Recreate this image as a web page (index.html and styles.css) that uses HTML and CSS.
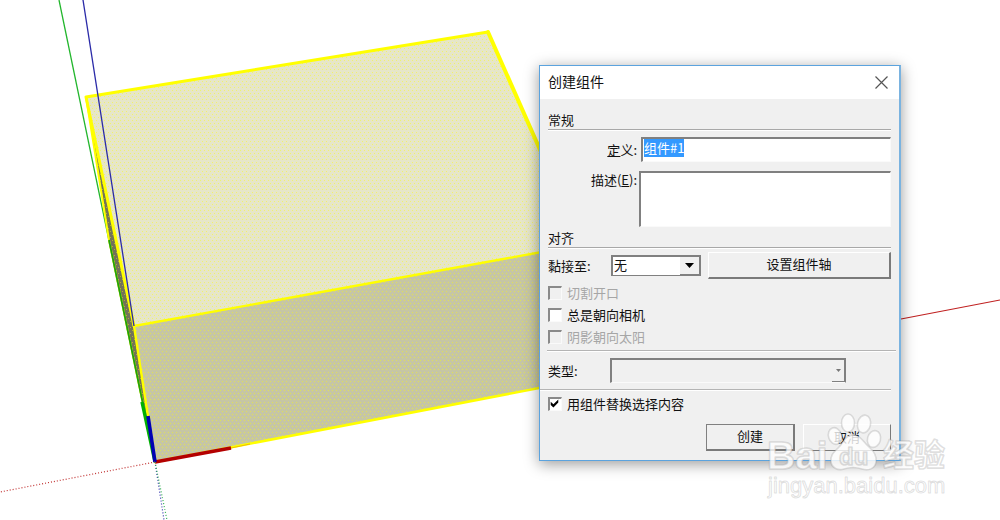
FILE: index.html
```
<!DOCTYPE html>
<html lang="zh-CN">
<head>
<meta charset="utf-8">
<meta name="viewport" content="width=device-width, initial-scale=1">
<title>创建组件</title>
<link rel="stylesheet" href="styles.css">
</head>

<body>
<main class="workspace">

<svg class="scene" viewBox="0 0 1000 520" preserveAspectRatio="xMinYMin slice" aria-hidden="true">
  <defs>
    <pattern id="dots" width="4" height="6" patternUnits="userSpaceOnUse">
      <rect x="0" y="0" width="1" height="1" fill="#ffff00"/>
      <rect x="2" y="3" width="1" height="1" fill="#ffff00"/>
    </pattern>
  </defs>

  <!-- axes behind the box -->
  <path d="M59 0L155 462" stroke="#22b62c" stroke-width="1.3"/>
  <path d="M901 319L1000 300" stroke="#c02020" stroke-width="1.2"/>

  <!-- faces -->
  <path d="M86 97L488 32L586 249L134 326Z" fill="#e6e6c8"/>
  <path d="M134 326L586 244L586 379L155 462Z" fill="#c6c6a4"/>
  <path d="M86 97L134 326L155 462L109 240Z" fill="#72725a"/>
  <path class="dots" d="M86 97L488 32L586 245L586 379L155 462L109 240Z" fill="url(#dots)"/>

  <!-- selected edges -->
  <g class="edges">
    <path d="M134 326L86 97L488 32" stroke-width="3"/>
    <path d="M488 32L586 254" stroke-width="4"/>
    <path d="M86 97L109 240L155 462" stroke-width="2"/>
    <path d="M155 462L134 326L586 244" stroke-width="2.4"/>
    <path d="M155 462L586 379" stroke-width="2.6"/>
  </g>

  <path d="M83 0L134 326" stroke="#2a2aa8" stroke-width="1.3"/>
  <path d="M109 240L155 462" stroke="#20a010" stroke-width="1.8"/>
  <path d="M142 402L155 462" stroke="#00b000" stroke-width="3.4"/>
  <path d="M231 448L250 444" stroke="#f0c000" stroke-width="1"/>
  <path d="M155 462L231 448" stroke="#b40000" stroke-width="3.6"/>
  <path d="M148 416L155 462" stroke="#0000b4" stroke-width="3.6"/>

  <!-- negative axes -->
  <g stroke-dasharray="1 2" stroke-width="1.2">
    <path d="M155 462L0 492" stroke="#c03030"/>
    <path d="M155 462L164 520" stroke="#3030b0"/>
    <path d="M155 462L167 520" stroke="#30b050"/>
  </g>
</svg>

<form class="dialog" role="dialog" aria-labelledby="dialog-title">
  <header class="titlebar">
    <h1 id="dialog-title">创建组件</h1>
    <button class="close" type="button" aria-label="关闭">
      <svg width="13" height="13" viewBox="0 0 13 13"><path d="M.5 .5L12.5 12.5M12.5 .5L.5 12.5" stroke="#555" stroke-width="1.2"/></svg>
    </button>
  </header>

  <div class="content">
    <h2 class="section">常规</h2>
    <div class="field">
      <label for="definition"><u>定</u>义:</label>
      <input class="sunken definition" id="definition" type="text" value="组件#1" autocomplete="off" spellcheck="false">
    </div>
    <div class="field">
      <label for="description">描述(<u>E</u>):</label>
      <textarea class="sunken description" id="description"></textarea>
    </div>

    <h2 class="section">对齐</h2>
    <div class="glue">
      <label for="glue">黏接至:</label>
      <div class="combo">
        <select class="sunken" id="glue"><option>无</option></select>
        <span class="arrow"><svg width="9" height="5" viewBox="0 0 9 5"><path d="M0 0H9L4.5 5Z"/></svg></span>
      </div>
      <button class="button" type="button">设置组件轴</button>
    </div>

    <div class="checks">
      <label class="check off"><input type="checkbox" disabled>切割开口</label>
      <label class="check"><input type="checkbox">总是朝向相机</label>
      <label class="check off"><input type="checkbox" disabled>阴影朝向太阳</label>
    </div>

    <div class="type">
      <label for="type">类型:</label>
      <div class="combo small">
        <select class="sunken" id="type" disabled><option></option></select>
        <span class="arrow"><svg width="5" height="3" viewBox="0 0 5 3"><path d="M0 0H5L2.5 3Z" fill="#777"/></svg></span>
      </div>
    </div>

    <label class="check"><input type="checkbox" checked>用组件替换选择内容</label>

    <div class="actions">
      <button class="button default" type="submit">创建</button>
      <button class="button cancel" type="button">取消</button>
    </div>
  </div>
</form>

<svg class="watermark" width="190" height="100" viewBox="0 0 190 100" aria-hidden="true">
  <g class="mark">
    <text class="latin" x="2" y="64" font-size="39">Bai</text>
    <ellipse cx="83" cy="18" rx="6.5" ry="9"/>
    <ellipse cx="99" cy="19" rx="6.5" ry="9" transform="rotate(12 99 19)"/>
    <ellipse cx="70" cy="31" rx="6.5" ry="8.5" transform="rotate(-18 70 31)"/>
    <ellipse cx="109" cy="34" rx="6.5" ry="8.5" transform="rotate(14 109 34)"/>
    <path d="M88 30C96 30 98 37 104 42C110 47 112 51 111 57C110 64 103 66 97 64C91 62 85 62 79 64C73 66 67 63 66 57C65 50 69 47 74 42C79 37 80 30 88 30Z"/>
    <text class="latin du" x="74" y="60" font-size="24">du</text>
    <text class="han" x="118" y="61" font-size="31">经验</text>
    <text class="url" x="3" y="88" font-size="22">jingyan.baidu.com</text>
  </g>
</svg>

</main>
<script src="script.js"></script>
</body>
</html>
```

FILE: styles.css
```
* {
  box-sizing: border-box;
}

body {
  margin: 0;
  background: #fff;
  color: #111;
  font: 13px/18px "Noto Sans CJK SC", sans-serif;
}

button, input, select, textarea {
  font: inherit;
  color: inherit;
}

.workspace {
  position: relative;
  min-height: 100vh;
  overflow: hidden;
}

.scene {
  display: block;
  width: 100%;
  height: 100vh;
  fill: none;
}

.dots {
  opacity: 0.45;
}

.edges {
  stroke: #ffff00;
  stroke-linejoin: round;
  stroke-linecap: round;
}

/* dialog window */
.dialog {
  position: absolute;
  left: 539px;
  top: 65px;
  width: 362px;
  background: #f0f0f0;
  border: 1px solid #5ba3de;
  border-right: 2px solid #7ab3e0;
  box-shadow: 0 3px 14px rgba(0, 0, 0, 0.4);
}

.titlebar {
  display: flex;
  align-items: center;
  justify-content: space-between;
  height: 33px;
  padding: 0 11px 0 8px;
  background: #fff;
}

.titlebar h1 {
  margin: 0;
  padding-bottom: 3px;
  font-size: 14px;
  line-height: 18px;
  font-weight: normal;
}

.close {
  display: flex;
  padding: 0;
  border: 0;
  background: none;
}

.content {
  padding: 12px 8px 9px;
}

.section {
  margin: 0 0 7px;
  border-bottom: 1px solid #a8a8a8;
  box-shadow: 0 1px #fff;
  font-size: 13px;
  line-height: 18px;
  font-weight: normal;
}

.sunken {
  border: 1px solid #fafafa;
  border-top: 2px solid #808080;
  border-left: 2px solid #808080;
  border-radius: 0;
  background: #fff;
  outline: none;
}

.field {
  display: grid;
  grid-template-columns: 89px 1fr;
  column-gap: 4px;
  margin-bottom: 9px;
}

.field label {
  padding-top: 4px;
  text-align: right;
}

.definition {
  width: 100%;
  height: 25px;
  padding: 0 0 6px 1px;
  line-height: 16px;
}

.definition::selection {
  background: #3399ff;
  color: #fff;
}

.description {
  display: block;
  width: 100%;
  height: 56px;
  padding: 1px;
  resize: none;
}

.field + .field label {
  padding-top: 0;
}

.field + .field {
  column-gap: 2px;
  margin-bottom: 2px;
}

.glue {
  display: grid;
  grid-template-columns: 63px 90px 1fr;
  align-items: center;
  margin-top: -3px;
}

.glue .button {
  margin-left: 7px;
}

.combo {
  position: relative;
}

.combo select {
  display: block;
  appearance: none;
  width: 100%;
  height: 21px;
  padding: 0 20px 2px 1px;
  border-right: 1px solid #808080;
  border-bottom: 1px solid #808080;
  line-height: 16px;
}

.combo .arrow {
  position: absolute;
  top: 2px;
  right: 1px;
  bottom: 1px;
  display: flex;
  align-items: center;
  justify-content: center;
  width: 20px;
  background: #f0f0f0;
  border-right: 1px solid #808080;
  border-bottom: 1px solid #808080;
  pointer-events: none;
}

.combo.small .arrow {
  width: 13px;
}

.combo.small select {
  height: 25px;
  background: #f0f0f0;
  border-bottom-color: #fafafa;
  opacity: 1;
}

.button {
  height: 27px;
  padding: 0 0 2px;
  background: #f0f0f0;
  border: 1px solid #fff;
  border-right: 2px solid #7a7a7a;
  border-bottom: 2px solid #7a7a7a;
  border-radius: 0;
}

.button.default {
  border-top-color: #808080;
  border-left-color: #808080;
}

.button.cancel {
  border-width: 1px;
}

.checks {
  display: grid;
  row-gap: 4px;
  margin: 5px -5px 7px -1px;
  padding: 0 0 4px 1px;
  border-bottom: 1px solid #b4b4b4;
  box-shadow: 0 1px #fff;
}

.check {
  display: flex;
  align-items: center;
}

.check input {
  appearance: none;
  width: 14px;
  height: 14px;
  margin: 0 5px 0 0;
  border: 1px solid #fafafa;
  border-top: 2px solid #8a8a8a;
  border-left: 2px solid #8a8a8a;
  background: #fff;
}

.check input:checked::before {
  content: "";
  display: block;
  width: 9px;
  height: 9px;
  background: #000;
  clip-path: polygon(8% 30%, 38% 58%, 92% 6%, 92% 40%, 38% 94%, 8% 66%);
}

.check.off {
  color: #a6a6a6;
}

.check.off input {
  background: #f0f0f0;
}

.type {
  display: grid;
  grid-template-columns: 62px 236px;
  align-items: center;
  margin: 0 0 5px -8px;
  padding: 0 0 6px 8px;
  border-bottom: 1px solid #b4b4b4;
  box-shadow: 0 1px #fff;
}

.actions {
  display: grid;
  grid-template-columns: 89px 88px;
  column-gap: 8px;
  justify-content: end;
  margin-top: 11px;
}

/* site mark over the lower right corner */
.watermark {
  position: absolute;
  left: 765px;
  top: 405px;
  pointer-events: none;
}

.mark {
  fill: rgba(255, 255, 255, 0.8);
  stroke: rgba(130, 130, 130, 0.25);
  stroke-width: 1.6;
  stroke-linejoin: round;
}

.latin {
  font-family: "Liberation Sans", sans-serif;
  font-weight: bold;
}

.du {
  fill: #f2f2f2;
}

.han {
  font-family: "Noto Sans CJK SC", sans-serif;
  font-weight: bold;
}

.url {
  font-family: "Liberation Sans", sans-serif;
  stroke-width: 1;
}
```

FILE: script.js
```
var definition = document.getElementById('definition');
definition.focus();
definition.select();
```
